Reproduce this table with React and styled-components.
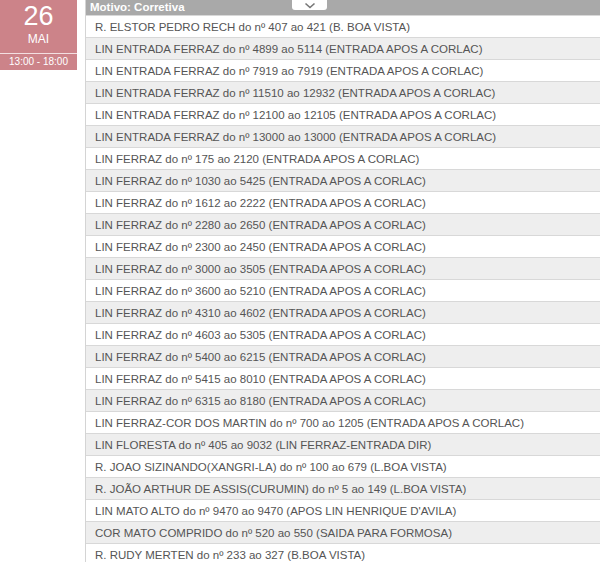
import React from "react";
import styled, { createGlobalStyle } from "styled-components";

const GlobalStyle = createGlobalStyle`
  html, body {
    margin: 0;
    padding: 0;
    background: #fff;
    font-family: "Liberation Sans", Arial, sans-serif;
  }
`;

const rows = [
  "R. ELSTOR PEDRO RECH do nº 407 ao 421 (B. BOA VISTA)",
  "LIN ENTRADA FERRAZ do nº 4899 ao 5114 (ENTRADA APOS A CORLAC)",
  "LIN ENTRADA FERRAZ do nº 7919 ao 7919 (ENTRADA APOS A CORLAC)",
  "LIN ENTRADA FERRAZ do nº 11510 ao 12932 (ENTRADA APOS A CORLAC)",
  "LIN ENTRADA FERRAZ do nº 12100 ao 12105 (ENTRADA APOS A CORLAC)",
  "LIN ENTRADA FERRAZ do nº 13000 ao 13000 (ENTRADA APOS A CORLAC)",
  "LIN FERRAZ do nº 175 ao 2120 (ENTRADA APOS A CORLAC)",
  "LIN FERRAZ do nº 1030 ao 5425 (ENTRADA APOS A CORLAC)",
  "LIN FERRAZ do nº 1612 ao 2222 (ENTRADA APOS A CORLAC)",
  "LIN FERRAZ do nº 2280 ao 2650 (ENTRADA APOS A CORLAC)",
  "LIN FERRAZ do nº 2300 ao 2450 (ENTRADA APOS A CORLAC)",
  "LIN FERRAZ do nº 3000 ao 3505 (ENTRADA APOS A CORLAC)",
  "LIN FERRAZ do nº 3600 ao 5210 (ENTRADA APOS A CORLAC)",
  "LIN FERRAZ do nº 4310 ao 4602 (ENTRADA APOS A CORLAC)",
  "LIN FERRAZ do nº 4603 ao 5305 (ENTRADA APOS A CORLAC)",
  "LIN FERRAZ do nº 5400 ao 6215 (ENTRADA APOS A CORLAC)",
  "LIN FERRAZ do nº 5415 ao 8010 (ENTRADA APOS A CORLAC)",
  "LIN FERRAZ do nº 6315 ao 8180 (ENTRADA APOS A CORLAC)",
  "LIN FERRAZ-COR DOS MARTIN do nº 700 ao 1205 (ENTRADA APOS A CORLAC)",
  "LIN FLORESTA do nº 405 ao 9032 (LIN FERRAZ-ENTRADA DIR)",
  "R. JOAO SIZINANDO(XANGRI-LA) do nº 100 ao 679 (L.BOA VISTA)",
  "R. JOÃO ARTHUR DE ASSIS(CURUMIN) do nº 5 ao 149 (L.BOA VISTA)",
  "LIN MATO ALTO do nº 9470 ao 9470 (APOS LIN HENRIQUE D'AVILA)",
  "COR MATO COMPRIDO do nº 520 ao 550 (SAIDA PARA FORMOSA)",
  "R. RUDY MERTEN do nº 233 ao 327 (B.BOA VISTA)",
];

const Page = styled.div`
  display: flex;
  align-items: flex-start;
  width: 600px;
  height: 562px;
  overflow: hidden;
`;

const DateBox = styled.div`
  width: 77px;
  flex-shrink: 0;
  background: #cc8389;
  color: #fff;
  text-align: center;
`;

const Day = styled.div`
  font-size: 27px;
  line-height: 30px;
  padding-top: 1px;
`;

const Month = styled.div`
  font-size: 12px;
  line-height: 14px;
  padding-top: 1px;
  padding-bottom: 7px;
`;

const Hours = styled.div`
  border-top: 1px solid #f3dfe1;
  font-size: 10px;
  line-height: 15px;
  padding-bottom: 1px;
`;

const Table = styled.div`
  margin-left: 8px;
  flex: 1;
  border-left: 1px solid #d4d4d4;
`;

const Header = styled.div`
  position: relative;
  height: 15px;
  background: #a9a9a9;
  color: #fff;
  font-weight: bold;
  font-size: 11.5px;
  line-height: 14px;
  padding-left: 4px;
  border-bottom: 1px solid #d8d8d8;
`;

const Toggle = styled.div`
  position: absolute;
  left: 206px;
  top: 0;
  width: 35px;
  height: 10px;
  background: #fff;
  border-radius: 0 0 3px 3px;
  display: flex;
  justify-content: center;
  align-items: center;
`;

const Row = styled.div`
  height: 19px;
  padding-top: 2px;
  line-height: 19px;
  border-bottom: 1px solid #d8d8d8;
  background: ${({ $alt }) => ($alt ? "#eeeeee" : "#ffffff")};
  color: #555;
  font-size: 11.5px;
  padding-left: 9px;
  white-space: nowrap;
`;

export default function App() {
  return (
    <>
      <GlobalStyle />
      <Page>
        <DateBox>
          <Day>26</Day>
          <Month>MAI</Month>
          <Hours>13:00 - 18:00</Hours>
        </DateBox>
        <Table>
          <Header>
            Motivo: Corretiva
            <Toggle>
              <svg width="12" height="7" viewBox="0 0 12 7">
                <path d="M1.5 1.5 L6 5.5 L10.5 1.5" fill="none" stroke="#777" strokeWidth="1.6" />
              </svg>
            </Toggle>
          </Header>
          {rows.map((r, i) => (
            <Row key={i} $alt={i % 2 === 1}>
              {r}
            </Row>
          ))}
        </Table>
      </Page>
    </>
  );
}
